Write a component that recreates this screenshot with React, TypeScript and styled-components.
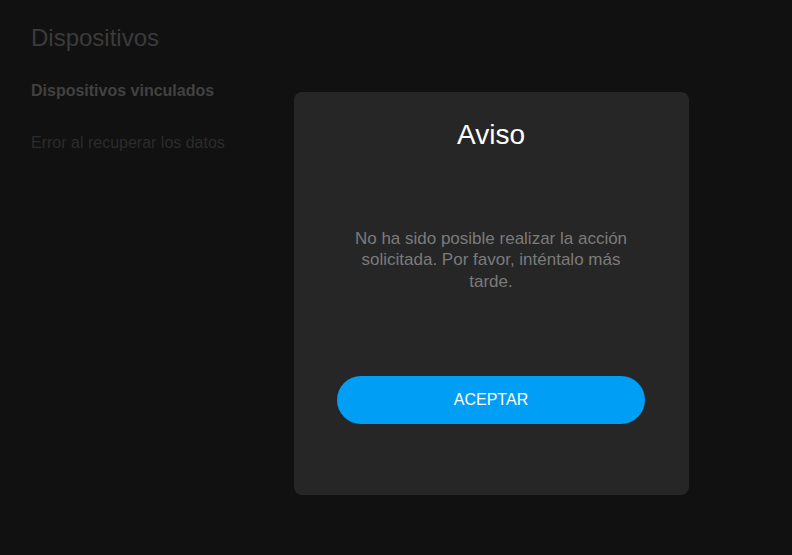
import React from "react";
import styled, { createGlobalStyle } from "styled-components";

const Global = createGlobalStyle`
  html, body {
    margin: 0;
    padding: 0;
    background: #111111;
    font-family: "Liberation Sans", Arial, sans-serif;
  }
  * { box-sizing: border-box; }
`;

const Page = styled.main`
  min-height: 555px;
  padding: 24px 31px;
  display: flex;
  flex-direction: column;
  background: #111111;
`;

const Heading = styled.h1`
  margin: 0;
  font-size: 24px;
  line-height: 28px;
  font-weight: 400;
  color: #3b3b3b;
`;

const SubHeading = styled.h2`
  margin: 29px 0 0;
  font-size: 16px;
  line-height: 20px;
  font-weight: 700;
  color: #414141;
`;

const ErrorText = styled.p`
  margin: 32px 0 0;
  font-size: 16px;
  line-height: 20px;
  color: #2c2c2c;
`;

const Overlay = styled.div`
  position: fixed;
  inset: 0;
`;

const Dialog = styled.div`
  position: absolute;
  left: 294px;
  top: 92px;
  width: 395px;
  height: 403px;
  padding: 27px 44px 71px 43px;
  background: #262626;
  border-radius: 8px;
  display: flex;
  flex-direction: column;
  align-items: center;
`;

const Title = styled.h3`
  margin: 0;
  font-size: 28px;
  line-height: 32px;
  font-weight: 400;
  color: #ffffff;
  text-align: center;
`;

const Message = styled.p`
  margin: 77px 0 0;
  max-width: 290px;
  font-size: 17px;
  line-height: 21.25px;
  color: #7b7b7b;
  text-align: center;
`;

const Button = styled.button`
  margin-top: auto;
  width: 100%;
  height: 48px;
  border: none;
  border-radius: 24px;
  background: #009ef4;
  color: #ffffff;
  font-family: "Liberation Sans", Arial, sans-serif;
  font-size: 16px;
  line-height: 48px;
  padding: 0;
  cursor: pointer;
`;

export default function App() {
  return (
    <>
      <Global />
      <Page>
        <Heading>Dispositivos</Heading>
        <SubHeading>Dispositivos vinculados</SubHeading>
        <ErrorText>Error al recuperar los datos</ErrorText>
      </Page>
      <Overlay>
        <Dialog role="dialog">
          <Title>Aviso</Title>
          <Message>
            No ha sido posible realizar la acción solicitada. Por favor,
            inténtalo más tarde.
          </Message>
          <Button>ACEPTAR</Button>
        </Dialog>
      </Overlay>
    </>
  );
}
